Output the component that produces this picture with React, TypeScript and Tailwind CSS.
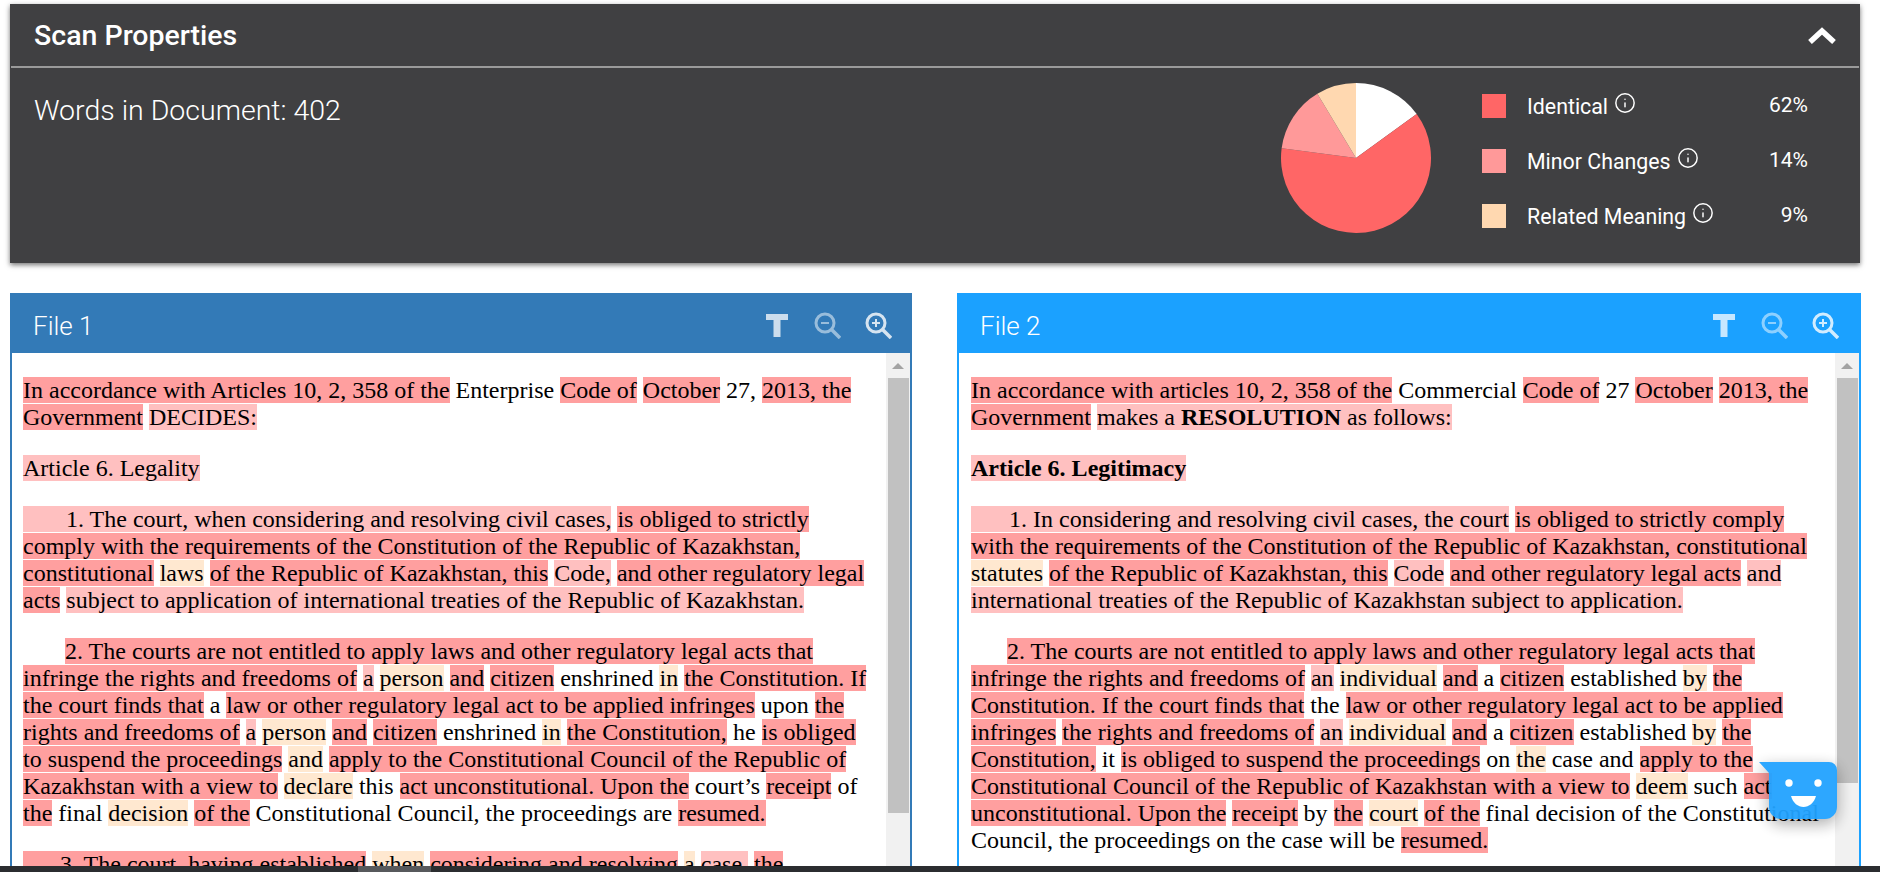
import { Info } from "lucide-react";
import type { ReactNode } from "react";

type Kind = "s" | "l" | "p" | "n";
type Seg = [Kind, ReactNode, string?];

const kindClass: Record<Kind, string> = {
  s: "bg-[#ff9f9f]",
  l: "bg-[#ffc0c0]",
  p: "bg-[#ffe8d0]",
  n: "",
};

const file1: { indent?: string; segs: Seg[] }[] = [
  {
    segs: [
      ["s", "In accordance with Articles 10, 2, 358 of the"],
      ["n", "Enterprise"],
      ["s", "Code of"],
      ["s", "October"],
      ["n", "27,"],
      ["s", "2013, the"],
      ["s", "Government"],
      ["l", "DECIDES:"],
    ],
  },
  { segs: [["l", "Article 6. Legality"]] },
  {
    segs: [
      ["l", "1. The court, when considering and resolving civil cases,", "pl-[43px]"],
      ["s", "is obliged to strictly comply with the requirements of the Constitution of the Republic of Kazakhstan, constitutional"],
      ["p", "laws"],
      ["s", "of the Republic of Kazakhstan, this"],
      ["l", "Code,"],
      ["s", "and other regulatory legal acts"],
      ["l", "subject to application of international treaties of the Republic of Kazakhstan."],
    ],
  },
  {
    indent: "indent-[42px]",
    segs: [
      ["s", "2. The courts are not entitled to apply laws and other regulatory legal acts that infringe the rights and freedoms of"],
      ["l", "a"],
      ["p", "person"],
      ["s", "and"],
      ["s", "citizen"],
      ["n", "enshrined"],
      ["p", "in"],
      ["s", "the Constitution. If the court finds that"],
      ["n", "a"],
      ["s", "law or other regulatory legal act to be applied infringes"],
      ["n", "upon"],
      ["s", "the rights and freedoms of"],
      ["l", "a"],
      ["p", "person"],
      ["s", "and"],
      ["s", "citizen"],
      ["n", "enshrined"],
      ["p", "in"],
      ["s", "the Constitution,"],
      ["n", "he"],
      ["s", "is obliged to suspend the proceedings"],
      ["p", "and"],
      ["s", "apply to the Constitutional Council of the Republic of Kazakhstan with a view to"],
      ["p", "declare"],
      ["n", "this"],
      ["s", "act unconstitutional. Upon the"],
      ["n", "court’s"],
      ["s", "receipt"],
      ["n", "of"],
      ["s", "the"],
      ["n", "final"],
      ["p", "decision"],
      ["s", "of the"],
      ["n", "Constitutional Council, the proceedings are"],
      ["s", "resumed."],
    ],
  },
  {
    segs: [
      ["s", "3. The court, having established", "pl-[37px]"],
      ["p", "when"],
      ["s", "considering and resolving"],
      ["p", "a"],
      ["l", "case,"],
      ["s", "the"],
    ],
  },
];

const file2: { indent?: string; segs: Seg[] }[] = [
  {
    segs: [
      ["s", "In accordance with articles 10, 2, 358 of the"],
      ["n", "Commercial"],
      ["s", "Code of"],
      ["n", "27"],
      ["s", "October"],
      ["s", "2013, the"],
      ["s", "Government"],
      ["l", <>makes a <b>RESOLUTION</b> as follows:</>],
    ],
  },
  { segs: [["l", <b>Article 6. Legitimacy</b>]] },
  {
    segs: [
      ["l", "1. In considering and resolving civil cases, the court", "pl-[38px]"],
      ["s", "is obliged to strictly comply with the requirements of the Constitution of the Republic of Kazakhstan, constitutional"],
      ["p", "statutes"],
      ["s", "of the Republic of Kazakhstan, this"],
      ["l", "Code"],
      ["s", "and other regulatory legal acts"],
      ["l", "and international treaties of the Republic of Kazakhstan subject to application."],
    ],
  },
  {
    indent: "indent-[36px]",
    segs: [
      ["s", "2. The courts are not entitled to apply laws and other regulatory legal acts that infringe the rights and freedoms of"],
      ["l", "an"],
      ["p", "individual"],
      ["s", "and"],
      ["n", "a"],
      ["s", "citizen"],
      ["n", "established"],
      ["p", "by"],
      ["s", "the Constitution. If the court finds that"],
      ["n", "the"],
      ["s", "law or other regulatory legal act to be applied infringes"],
      ["s", "the rights and freedoms of"],
      ["l", "an"],
      ["p", "individual"],
      ["s", "and"],
      ["n", "a"],
      ["s", "citizen"],
      ["n", "established"],
      ["p", "by"],
      ["s", "the Constitution,"],
      ["n", "it"],
      ["s", "is obliged to suspend the proceedings"],
      ["n", "on"],
      ["p", "the"],
      ["n", "case and"],
      ["s", "apply to the Constitutional Council of the Republic of Kazakhstan with a view to"],
      ["p", "deem"],
      ["n", "such"],
      ["s", "act unconstitutional. Upon the"],
      ["s", "receipt"],
      ["n", "by"],
      ["s", "the"],
      ["p", "court"],
      ["s", "of the"],
      ["n", "final decision of the Constitutional Council, the proceedings on the case will be"],
      ["s", "resumed."],
    ],
  },
];

const legend = [
  { label: "Identical", pct: "62%", color: "bg-[#ff6666]" },
  { label: "Minor Changes", pct: "14%", color: "bg-[#ff9999]" },
  { label: "Related Meaning", pct: "9%", color: "bg-[#ffd8b0]" },
];

const slicePath = (from: number, to: number) => {
  const pt = (deg: number) => {
    const a = (deg * Math.PI) / 180;
    return `${75 + 75 * Math.sin(a)} ${75 - 75 * Math.cos(a)}`;
  };
  return `M75 75 L${pt(from)} A75 75 0 ${to - from > 180 ? 1 : 0} 1 ${pt(to)} Z`;
};

const PieChart = () => (
  <svg width="150" height="150" viewBox="0 0 150 150">
    <path d={slicePath(0, 54)} fill="#ffffff" />
    <path d={slicePath(54, 277.5)} fill="#ff6666" />
    <path d={slicePath(277.5, 329)} fill="#ff9999" />
    <path d={slicePath(329, 360)} fill="#ffd8b0" />
  </svg>
);

const PanelIcons = () => (
  <div className="mt-[4px] flex items-center text-white">
    <svg width="22" height="23" viewBox="0 0 22 23" className="opacity-75">
      <path d="M0 0H22V6H14.5V23H7.5V6H0Z" fill="currentColor" />
    </svg>
    <svg width="27" height="27" viewBox="0 0 27 27" className="ml-[26px] opacity-50" fill="none" stroke="currentColor">
      <circle cx="11" cy="11" r="9" strokeWidth="3" />
      <path d="M17.5 17.5L26 26" strokeWidth="3.5" />
      <path d="M7 11H15" strokeWidth="2" />
    </svg>
    <svg width="27" height="27" viewBox="0 0 27 27" className="ml-[24px] opacity-80" fill="none" stroke="currentColor">
      <circle cx="11" cy="11" r="9" strokeWidth="3" />
      <path d="M17.5 17.5L26 26" strokeWidth="3.5" />
      <path d="M7 11H15M11 7V15" strokeWidth="2" />
    </svg>
  </div>
);

const Panel = ({
  title,
  paragraphs,
  headerClass,
  borderClass,
  widthClass,
  thumbClass,
  pad,
}: {
  title: string;
  paragraphs: { indent?: string; segs: Seg[] }[];
  headerClass: string;
  borderClass: string;
  widthClass: string;
  thumbClass: string;
  pad: string;
}) => (
  <section className={`flex flex-col min-h-0 h-full ${widthClass}`}>
    <header className={`flex h-[60px] shrink-0 items-center justify-between pl-[23px] text-white ${headerClass}`}>
      <h2 className="mt-[7px] text-[26px] font-light">{title}</h2>
      <PanelIcons />
    </header>
    <div className={`flex min-h-0 flex-1 overflow-hidden border-x-2 bg-white ${borderClass}`}>
      <div className={`flex-1 min-w-0 pt-[24px] font-['Liberation_Serif',serif] text-[24px] leading-[27px] text-black ${pad}`}>
        {paragraphs.map((p, i) => (
          <p key={i} className={`mb-[24px] ${p.indent ?? ""}`}>
            {p.segs.map(([kind, text, extra], j) => (
              <span key={j}>
                <span className={`${kindClass[kind]} ${extra ?? ""}`}>{text}</span>{" "}
              </span>
            ))}
          </p>
        ))}
      </div>
      <div className="flex w-[24px] shrink-0 flex-col items-center bg-[#f1f1f1]">
        <div className="flex h-[25px] w-full items-center justify-center">
          <div className="h-0 w-0 border-x-[6px] border-b-[6px] border-x-transparent border-b-[#a3a3a3]" />
        </div>
        <div className={`w-[21px] bg-[#c1c1c1] ${thumbClass}`} />
      </div>
    </div>
  </section>
);

export default function App() {
  return (
    <div className="relative flex h-[872px] flex-col overflow-hidden bg-white font-['Roboto',sans-serif]">
      <main className="flex min-h-0 flex-1 flex-col pl-[10px] pr-[19px] pt-[4px]">
        <section className="mr-[1px] h-[259px] shrink-0 bg-[#404042] text-white shadow-[0_2px_5px_rgba(0,0,0,0.55)]">
          <div className="mx-[1px] flex h-[64px] items-center justify-between border-b-2 border-[#9a9a9a] pl-[23px] pr-[23px] pb-[1px]">
            <h1 className="mt-[3px] text-[28.5px] font-medium">Scan Properties</h1>
            <svg width="28" height="17" viewBox="0 0 28 17" fill="none" stroke="white" strokeWidth="5.5" className="mt-[2px]">
              <path d="M2 15L14 4L26 15" />
            </svg>
          </div>
          <div className="flex items-start pl-[24px] pr-[52px]">
            <p className="flex-1 pt-[23px] text-[28.5px] font-light leading-[40px]">Words in Document: 402</p>
            <div className="mr-[51px] mt-[15px]">
              <PieChart />
            </div>
            <ul className="mt-[26px] flex w-[326px] flex-col gap-[31px]">
              {legend.map((row) => (
                <li key={row.label} className="flex h-[24px] items-center text-[21.33px]">
                  <span className={`h-[24px] w-[24px] ${row.color}`} />
                  <span className="ml-[21px] mt-[2px]">{row.label}</span>
                  <Info size={22} strokeWidth={1.6} className="mb-[6px] ml-[6px]" />
                  <span className="ml-auto text-[21px]">{row.pct}</span>
                </li>
              ))}
            </ul>
          </div>
        </section>
        <div className="mt-[30px] flex min-h-0 flex-1 gap-[45px]">
          <Panel
            title="File 1"
            paragraphs={file1}
            headerClass="bg-[#337ab7] pr-[20px]"
            borderClass="border-[#337ab7]"
            widthClass="w-[902px]"
            thumbClass="h-[435px]"
            pad="pl-[11px] pr-[11px]"
          />
          <Panel
            title="File 2"
            paragraphs={file2}
            headerClass="bg-[#1ba1ff] pr-[22px]"
            borderClass="border-[#1ba1ff]"
            widthClass="w-[904px]"
            thumbClass="h-[405px]"
            pad="pl-[12px] pr-[12px]"
          />
        </div>
      </main>
      <div className="h-[6px] shrink-0 bg-[#2b2d30] pl-[358px]">
        <div className="h-full w-[73px] bg-[#57595c]" />
      </div>
      {/* chat widget */}
      <div className="absolute left-[1759px] top-[762px] h-[57px] w-[78px] opacity-95 drop-shadow-[0_5px_8px_rgba(0,0,0,0.35)]">
        <svg width="78" height="57" viewBox="0 0 78 57">
          <path d="M0 0H70A8 8 0 0 1 78 8V45A12 12 0 0 1 66 57H22A12 12 0 0 1 10 45V11Z" fill="#22a3ff" />
          <circle cx="30" cy="21" r="3.7" fill="white" />
          <circle cx="59" cy="21" r="3.7" fill="white" />
          <path d="M32 34H57C55 41 50 45 44.5 45C39 45 34 41 32 34Z" fill="white" />
        </svg>
      </div>
    </div>
  );
}
